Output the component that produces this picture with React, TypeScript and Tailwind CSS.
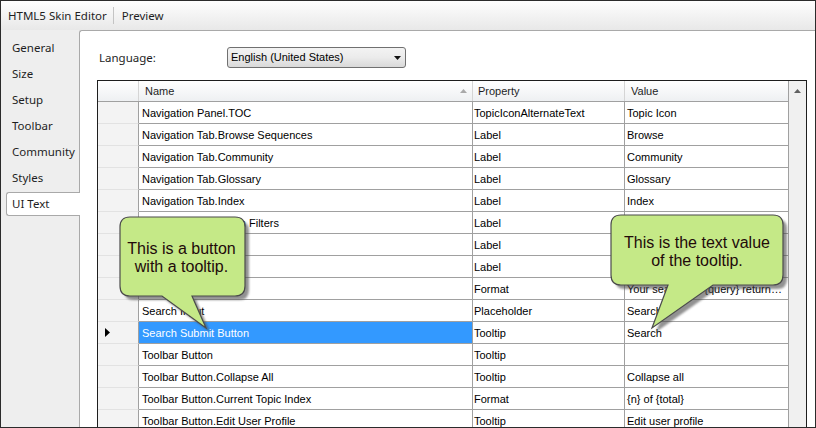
import React from 'react'

const TABS = ['General', 'Size', 'Setup', 'Toolbar', 'Community', 'Styles', 'UI Text']

// rows 7-9 sit fully under the left callout, so their hidden cells stay empty
const ROWS: [string, string, string][] = [
  ['Navigation Panel.TOC', 'TopicIconAlternateText', 'Topic Icon'],
  ['Navigation Tab.Browse Sequences', 'Label', 'Browse'],
  ['Navigation Tab.Community', 'Label', 'Community'],
  ['Navigation Tab.Glossary', 'Label', 'Glossary'],
  ['Navigation Tab.Index', 'Label', 'Index'],
  ['Search Panel.Search Filters', 'Label', ''],
  ['', 'Label', ''],
  ['', 'Label', ''],
  ['', 'Format', 'Your search for {query} returned {total} result(s).'],
  ['Search Input', 'Placeholder', 'Search'],
  ['Search Submit Button', 'Tooltip', 'Search'],
  ['Toolbar Button', 'Tooltip', ''],
  ['Toolbar Button.Collapse All', 'Tooltip', 'Collapse all'],
  ['Toolbar Button.Current Topic Index', 'Format', '{n} of {total}'],
  ['Toolbar Button.Edit User Profile', 'Tooltip', 'Edit user profile'],
]

const SELECTED = 10

function Callouts() {
  const left =
    'M130,217 H235 Q245,217 245,227 V286 Q245,296 235,296 H192 L206,328 L162,296 H130 Q120,296 120,286 V227 Q120,217 130,217 Z'
  const right =
    'M621,215 H773 Q783,215 783,225 V275 Q783,285 773,285 H713 L652,328 L668,285 H621 Q611,285 611,275 V225 Q611,215 621,215 Z'
  return (
    <svg
      className="absolute left-[-1px] top-[-1px] w-[816px] h-[428px] pointer-events-none"
      viewBox="0 0 816 428"
    >
      <defs>
        <filter id="sh" x="-10%" y="-10%" width="130%" height="130%">
          <feGaussianBlur stdDeviation="1.2" />
        </filter>
      </defs>
      {[left, right].map((d, i) => (
        <g key={i}>
          <path d={d} transform="translate(4,4)" fill="#4a4a4a" opacity="0.6" filter="url(#sh)" />
          <path d={d} fill="#c5e987" stroke="#4b4b4b" strokeWidth="1.2" />
        </g>
      ))}
      <g fontFamily="'Liberation Sans', Arial, sans-serif" fontSize="16" fill="#220a0a" textAnchor="middle">
        <text x="181.5" y="254">This is a button</text>
        <text x="181.5" y="272">with a tooltip.</text>
        <text x="697" y="248">This is the text value</text>
        <text x="697" y="266">of the tooltip.</text>
      </g>
    </svg>
  )
}

export default function App() {
  return (
    <div className="relative w-[816px] h-[428px] overflow-hidden border border-[#2b2b2b] bg-[#eeeeee] flex flex-col font-['Noto_Sans',sans-serif] text-[11.5px] text-[#1e1e1e]">
      {/* title bar */}
      <div className="h-[29px] shrink-0 flex items-center bg-gradient-to-b from-[#fefefe] to-[#e8e8e8]">
        <span className="pl-[7px] pr-[6px]">HTML5 Skin Editor</span>
        <span className="w-px h-[17px] bg-[#c4c4c4]" />
        <span className="pl-[8px]">Preview</span>
      </div>

      <div className="flex flex-1 min-h-0">
        {/* side tabs */}
        <div className="w-[78px] shrink-0 pt-[5px] flex flex-col">
          {TABS.map(t =>
            t === 'UI Text' ? (
              <div
                key={t}
                className="relative z-10 my-px ml-[5px] w-[74px] h-[24px] pl-[5px] flex items-center bg-white border border-r-0 border-[#a9a9a9] rounded-l-[3px]"
              >
                {t}
              </div>
            ) : (
              <div key={t} className="h-[26px] pl-[11px] flex items-center">
                {t}
              </div>
            )
          )}
        </div>

        {/* panel */}
        <div className="flex-1 min-w-0 flex flex-col bg-white border-l border-t border-[#a9a9a9] rounded-tl-[3px] pt-[16px] pl-[17px] pr-[8px]">
          <div className="flex items-center h-[21px] pl-[2px] shrink-0">
            <span className="w-[128px]">Language:</span>
            <div className="w-[179px] h-[21px] rounded-[3px] border border-[#707070] bg-gradient-to-b from-[#f3f3f3] via-[#ebebeb] to-[#d9d9d9] flex items-center justify-between pl-[3px] pr-[4px] font-['Liberation_Sans',Arial,sans-serif] text-[11px] text-black">
              <span>English (United States)</span>
              <svg width="7" height="4" viewBox="0 0 7 4">
                <path d="M0 0H7L3.5 4Z" fill="#111" />
              </svg>
            </div>
          </div>

          {/* grid */}
          <div className="mt-[12px] flex-1 min-h-0 flex overflow-hidden border border-b-0 border-[#1e1e1e] font-['Liberation_Sans',Arial,sans-serif] text-[11px] text-black">
            <div className="w-[691px] shrink-0 flex flex-col">
              <div className="flex h-[21px] shrink-0 border-b border-[#a0a0a0] bg-gradient-to-b from-white to-[#eef0f2] text-[#1e1e1e]">
                <div className="w-[41px] border-r border-[#d5d5d5]" />
                <div className="w-[334px] border-r border-[#d5d5d5] pl-[6px] pr-[5px] flex items-center justify-between">
                  <span>Name</span>
                  <svg width="7" height="4" viewBox="0 0 7 4">
                    <path d="M0 4H7L3.5 0Z" fill="#a9a9a9" />
                  </svg>
                </div>
                <div className="w-[152px] border-r border-[#d5d5d5] pl-[5px] flex items-center">Property</div>
                <div className="w-[164px] border-r border-[#a0a0a0] pl-[6px] flex items-center">Value</div>
              </div>

              {ROWS.map(([name, prop, value], i) => (
                <div key={i} className="flex h-[22px] shrink-0">
                  <div className="w-[41px] border-r border-b border-r-[#a0a0a0] border-b-[#e2e2e2] bg-[#f3f3f3] pl-[7px] flex items-center">
                    {i === SELECTED && (
                      <svg width="5" height="9" viewBox="0 0 5 9">
                        <path d="M0 0L5 4.5L0 9Z" fill="#000" />
                      </svg>
                    )}
                  </div>
                  <div
                    className={
                      i === SELECTED
                        ? 'w-[334px] border-r border-b border-[#a0a0a0] pl-[3px] pt-px leading-[20px] truncate bg-[#3399ff] text-white'
                        : 'w-[334px] border-r border-b border-[#a0a0a0] pl-[3px] pt-px leading-[20px] truncate'
                    }
                  >
                    {name}
                  </div>
                  <div className="w-[152px] border-r border-b border-[#a0a0a0] pl-[1px] pt-px leading-[20px] truncate">{prop}</div>
                  <div className="w-[164px] border-r border-b border-[#a0a0a0] pl-[2px] pr-[3px] pt-px leading-[20px] truncate">{value}</div>
                </div>
              ))}
            </div>

            {/* scrollbar */}
            <div className="w-[17px] shrink-0 bg-[#f0f0f0] pt-[8px] pl-[5px]">
              <svg width="7" height="4" viewBox="0 0 7 4" className="block">
                <path d="M0 4H7L3.5 0Z" fill="#606060" />
              </svg>
            </div>
          </div>
        </div>
      </div>

      <Callouts />
    </div>
  )
}
